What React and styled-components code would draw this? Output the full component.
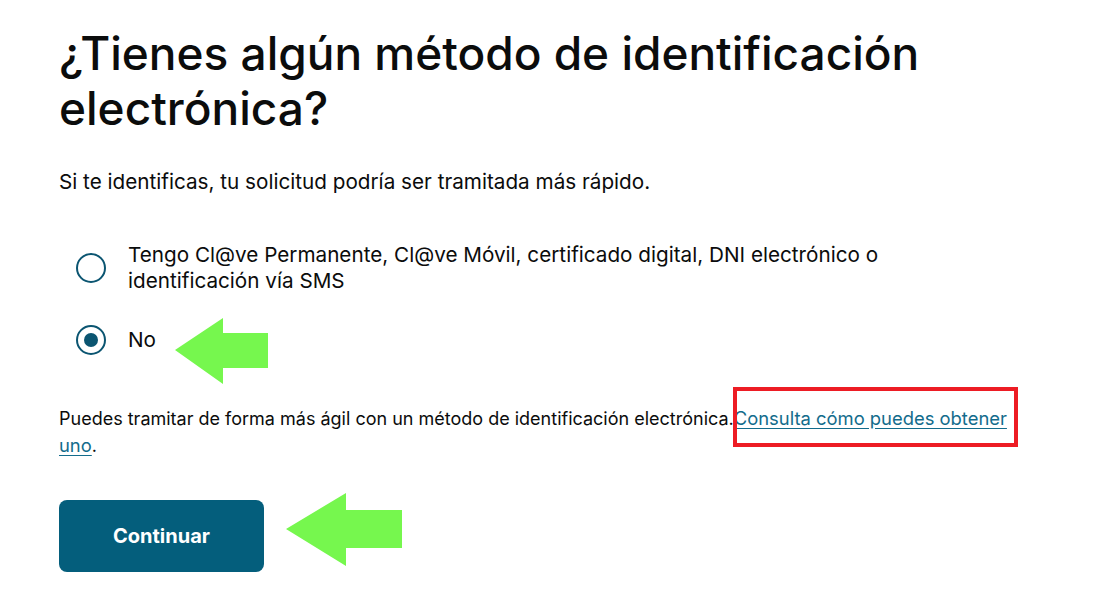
import React from "react";
import styled, { createGlobalStyle } from "styled-components";

const GlobalStyle = createGlobalStyle`
  html, body {
    margin: 0;
    padding: 0;
    background: #ffffff;
  }
  body {
    font-family: Inter, "Noto Sans", "Liberation Sans", sans-serif;
    color: #0b0c0c;
  }
`;

const App = () => {
  return (
    <Page>
      <GlobalStyle />
      <Title>¿Tienes algún método de identificación electrónica?</Title>
      <Lead>Si te identificas, tu solicitud podría ser tramitada más rápido.</Lead>

      <Options>
        <Option>
          <Radio />
          <OptionLabel>
            Tengo Cl@ve Permanente, Cl@ve Móvil, certificado digital, DNI
            electrónico o identificación vía SMS
          </OptionLabel>
        </Option>
        <Option>
          <Radio $checked />
          <OptionLabel>No</OptionLabel>
          <Arrow $left={175} $top={318} width="95" height="66" viewBox="0 0 95 66">
            <path d="M0 32 L48 0 L48 15 L93 15 L93 50 L48 50 L48 66 Z" />
          </Arrow>
        </Option>
      </Options>

      <Note>
        Puedes tramitar de forma más ágil con un método de identificación
        electrónica.<NoteLink href="#">Consulta cómo puedes obtener uno</NoteLink>.
        <Highlight />
      </Note>

      <ButtonRow>
        <Button type="button">Continuar</Button>
        <Arrow $left={286} $top={493} width="117" height="73" viewBox="0 0 117 73">
          <path d="M0 36 L60 0 L60 17 L116 17 L116 55 L60 55 L60 73 Z" />
        </Arrow>
      </ButtonRow>
    </Page>
  );
};

const Page = styled.main`
  position: relative;
  width: 1100px;
  height: 593px;
  box-sizing: border-box;
  padding: 26px 0 0 59px;
  overflow: hidden;
`;

const Title = styled.h1`
  margin: 0;
  width: 900px;
  font-size: 46px;
  line-height: 55px;
  font-weight: 500;
  color: #0b0c0c;
`;

const Lead = styled.p`
  margin: 32px 0 0;
  font-size: 20.7px;
  line-height: 28px;
`;

const Options = styled.div`
  display: flex;
  flex-direction: column;
  gap: 31px;
  margin-top: 46px;
  padding-left: 17px;
`;

const Option = styled.label`
  display: flex;
  align-items: center;
  gap: 22px;
  font-size: 20.7px;
  line-height: 26px;
`;

const Radio = styled.span`
  flex: none;
  width: 30px;
  height: 30px;
  box-sizing: border-box;
  border-radius: 50%;
  border: 2.5px solid #0b5571;
  display: flex;
  align-items: center;
  justify-content: center;

  &::after {
    content: "";
    display: ${(p) => (p.$checked ? "block" : "none")};
    width: 14px;
    height: 14px;
    border-radius: 50%;
    background: #0b5571;
  }
`;

const OptionLabel = styled.span`
  width: 830px;
`;

const Note = styled.p`
  margin: 50px 0 0;
  width: 965px;
  font-size: 18px;
  line-height: 27px;
`;

const NoteLink = styled.a`
  color: #136c8c;
  font-size: 18.4px;
  text-decoration: underline;
  text-underline-offset: 3px;
`;

const Highlight = styled.span`
  position: absolute;
  left: 733px;
  top: 387px;
  width: 285px;
  height: 60px;
  box-sizing: border-box;
  border: 4px solid #ed1c24;
  pointer-events: none;
`;

const ButtonRow = styled.div`
  margin-top: 41px;
`;

const Button = styled.button`
  display: block;
  width: 205px;
  height: 72px;
  border: none;
  border-radius: 8px;
  background: #045e7c;
  color: #ffffff;
  font-family: inherit;
  font-size: 20px;
  font-weight: 700;
  cursor: pointer;
`;

const Arrow = styled.svg`
  position: absolute;
  left: ${(p) => p.$left}px;
  top: ${(p) => p.$top}px;
  fill: #76f74e;
`;

export default App;
